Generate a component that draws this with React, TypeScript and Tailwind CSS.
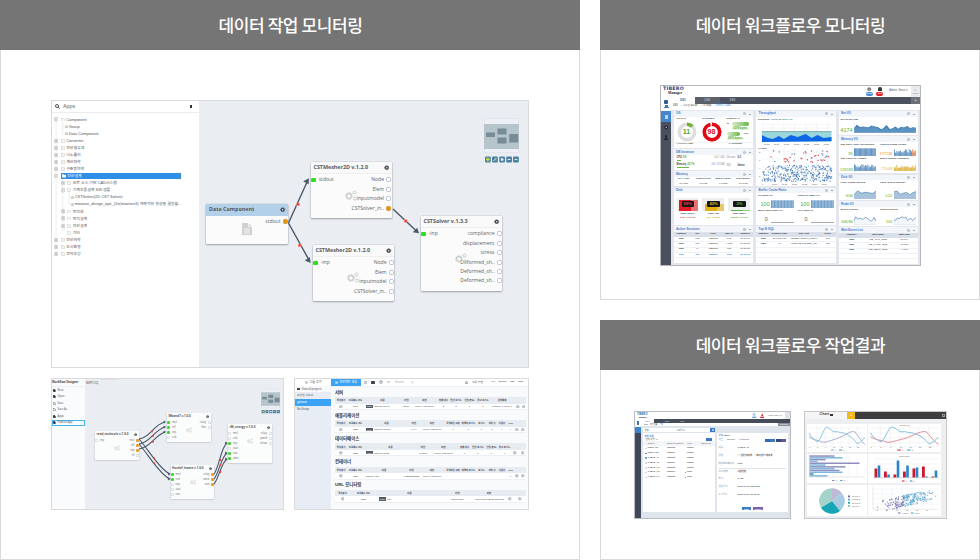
import React, { ReactNode } from "react";

const KR = "font-['Liberation_Sans','Noto_Sans_CJK_KR',sans-serif]";

function Panel({ title, className, children }: { title: string; className: string; children: ReactNode }) {
  return (
    <section className={`flex flex-col ${className}`}>
      <h2 className="flex h-[50px] shrink-0 items-center justify-center bg-[#757575] pl-[1px] font-['Noto_Sans_CJK_KR',sans-serif] text-[17px] font-medium tracking-[-0.4px] text-white">
        {title}
      </h2>
      <div className="min-h-0 flex-1 border border-t-0 border-[#dadada] bg-white">{children}</div>
    </section>
  );
}

/* ---------- small glyphs ---------- */

function Cog({ className = "", color = "#4a4e52" }: { className?: string; color?: string }) {
  return (
    <svg viewBox="0 0 10 10" className={className}>
      <circle cx="5" cy="5" r="3.8" fill={color} stroke={color} strokeWidth="1.4" strokeDasharray="1.6 1" />
      <circle cx="5" cy="5" r="1.4" fill="#e8e8e8" />
    </svg>
  );
}

function Gears({ className = "" }: { className?: string }) {
  return (
    <svg viewBox="0 0 24 22" className={className} fill="none" stroke="#c9cbcd">
      <circle cx="8" cy="12" r="5" strokeWidth="2.6" />
      <circle cx="8" cy="12" r="7" strokeWidth="1.6" strokeDasharray="2.6 2.9" />
      <circle cx="19" cy="5" r="3" strokeWidth="2" />
      <circle cx="20" cy="17" r="3" strokeWidth="2" />
    </svg>
  );
}

function Ring({ className = "" }: { className?: string }) {
  return (
    <svg viewBox="0 0 10 10" className={className} fill="none" stroke="#7f8d99">
      <circle cx="5" cy="5" r="3.8" strokeWidth="1.6" />
      <circle cx="5" cy="5" r="1" strokeWidth="1.4" />
    </svg>
  );
}

function MiniMap({ small = false }: { small?: boolean }) {
  return (
    <svg viewBox="0 0 35 46" className={small ? "h-[25px] w-[19px]" : "h-[46px] w-[35px]"}>
      <rect x=".3" y=".3" width="34.4" height="34.4" fill="#edf0f4" stroke="#dbe1e7" strokeWidth=".6" />
      <rect y="6" width="35" height="25" fill="#b6c4cc" />
      <g fill="#768d98">
        <rect x="2" y="14.5" width="9" height="4.5" />
        <rect x="13.5" y="10.5" width="9" height="6" />
        <rect x="13.5" y="19.5" width="9" height="6" />
        <rect x="25.2" y="16" width="9" height="8.5" />
      </g>
      {[1, 8, 15.2, 22.2, 29].map((x, i) => (
        <g key={x}>
          <rect x={x} y="38.5" width="5.8" height="6" rx="1" fill="#4e819f" />
          {i === 0 ? (
            <path d={`M${x + 1} 41.5h3.8M${x + 2.9} 39.6v3.8`} stroke="#c9dc36" strokeWidth="1.3" />
          ) : (
            <path d={i === 1 ? `M${x + 1.5} 43l2.8-3` : `M${x + 1.6} 41.5h2.6`} stroke="#e5f0f5" strokeWidth={i === 2 ? 2.4 : 1} />
          )}
        </g>
      ))}
    </svg>
  );
}

/* ---------- job monitoring: application tree ---------- */

type TreeItem = { t: string; d: number; leaf?: boolean; open?: boolean; sel?: boolean; bare?: boolean };
const tree: TreeItem[] = [
  { t: "Component", d: 0, open: true },
  { t: "Group", d: 1, leaf: true },
  { t: "Data Component", d: 1, leaf: true },
  { t: "Converter", d: 0 },
  { t: "전산열유체", d: 0 },
  { t: "나노물리", d: 0 },
  { t: "계산화학", d: 0 },
  { t: "구조동역학", d: 0 },
  { t: "전산설계", d: 0, open: true, sel: true },
  { t: "오픈 소스 기반 CAD시스템", d: 1 },
  { t: "기계부품설계 SW 샘플", d: 1, open: true },
  { t: "CSTSolver(2D CST Solver)", d: 2, leaf: true },
  { t: "moatore_design_opti_(2e(moatore3) 개략적인 형상을 결정함..", d: 2, leaf: true },
  { t: "최적화", d: 1 },
  { t: "최적설계", d: 1 },
  { t: "전산설계", d: 1 },
  { t: "기타", d: 1, bare: true },
  { t: "전산의학", d: 0 },
  { t: "도시환경", d: 0 },
  { t: "전자부성", d: 0 },
];
const indent = ["pl-[2px]", "pl-[8.5px]", "pl-[13px]"];

function Expander({ open }: { open?: boolean }) {
  return (
    <svg viewBox="0 0 8 8" className="mr-[2.2px] h-[4.4px] w-[4.4px] shrink-0" fill="none" stroke="#989898" strokeWidth="1">
      <circle cx="4" cy="4" r="3.4" fill="#fff" />
      <path d={open ? "M2 4h4" : "M2 4h4M4 2v4"} />
    </svg>
  );
}

function Tree() {
  return (
    <div className={`w-[147px] shrink-0 overflow-hidden bg-white leading-none text-[#555] ${KR}`}>
      <div className="flex h-[12px] items-center border-b border-[#ececec] pl-[3px] pr-[7px]">
        <svg viewBox="0 0 10 10" className="h-[5px] w-[5px]" fill="none" stroke="#444" strokeWidth="1.8">
          <circle cx="4" cy="4" r="3" />
          <path d="M6 6l3.4 3.4" />
        </svg>
        <span className="ml-[3px] text-[5.3px] text-[#666]">Apps</span>
        <span className="ml-auto h-[2.5px] w-[2.5px] bg-[#333]" />
      </div>
      <div className="relative mt-[3px]">
        <svg className="absolute left-0 top-0 h-[145px] w-[24px]" stroke="#c4c4c4" strokeWidth=".5" strokeDasharray=".7 .5" fill="none">
          <path d="M4 3v135M10.7 6v12M10.7 11h4M10.7 18h4M10.7 62v52h4M17 76v12h4M17 81h4" />
        </svg>
        {tree.map((n, i) => (
          <div key={i} className={`relative flex h-[7.08px] items-center ${n.leaf ? (n.d === 1 ? "pl-[13px]" : "pl-[19px]") : indent[n.d]}`}>
            {!n.leaf && (n.bare ? <span className="w-[6.6px]" /> : <Expander open={n.open} />)}
            <div className={`flex h-[6px] items-center whitespace-nowrap text-[3.95px] ${n.sel ? "w-[120.5px] bg-[#2f8fe6] text-white" : ""}`}>
              {n.leaf ? (
                <svg viewBox="0 0 8 8" className="mr-[.3px] h-[3.6px] w-[3.4px] shrink-0" fill="none" stroke="#8b8b8b">
                  <circle cx="4" cy="4" r="3" />
                  <path d="M4 2v4" />
                </svg>
              ) : (
                <svg viewBox="0 0 10 8" className={`mr-[1.3px] h-[3.7px] w-[4.3px] shrink-0 ${n.sel ? "ml-[1px]" : ""}`} fill={n.sel ? "#fff" : "none"} stroke={n.sel ? "#fff" : "#a6a6a6"}>
                  <path d="M.5 7.3V.8h3l1 1.2h5v5.3z" />
                </svg>
              )}
              <span>{n.t}</span>
            </div>
          </div>
        ))}
      </div>
    </div>
  );
}

/* ---------- workflow nodes on the canvas ---------- */

type Port = { t: string; on?: boolean };
function BigNode({ place, title, left, right, blue }: { place: string; title: string; left?: string; right: Port[]; blue?: boolean }) {
  return (
    <div className={`absolute rounded-[1px] bg-[#fbfbfb] font-['Open_Sans',sans-serif] leading-none shadow-[0_1px_2px_rgba(60,70,80,.4),0_0_0_.5px_rgba(60,70,80,.15)] ${place}`}>
      <div className={`flex h-[11.5px] items-center justify-between pl-[3px] pr-[2.5px] text-[5.35px] font-bold text-[#555a5f] ${blue ? "bg-[#b3d0eb]" : "border-b border-[#efefef] bg-[#f9f9f9]"}`}>
        <span className="whitespace-nowrap">{title}</span>
        <Cog className="h-[5.4px] w-[5.4px]" />
      </div>
      <div className="flex justify-between pr-[.5px] pt-[1.5px] text-[5.05px] text-[#5f6468]">
        <div className="flex h-[9.5px] items-center gap-[3px] pl-[.7px]">
          {left && (
            <>
              <span className="h-[4.5px] w-[4.5px] rounded-[1px] bg-[#2be01c]" />
              <span>{left}</span>
            </>
          )}
        </div>
        <div className="flex flex-col items-end">
          {right.map((p, i) => (
            <div key={i} className="flex h-[9.45px] items-center gap-[2px] whitespace-nowrap">
              <span>{p.t}</span>
              <span className={`h-[5px] w-[5px] rounded-[1.5px] border ${p.on ? "border-[#d99a3c] bg-[#ea940d]" : "border-[#bbbfd0] bg-white"}`} />
            </div>
          ))}
        </div>
      </div>
    </div>
  );
}

function JobMonitor() {
  return (
    <div className="flex h-[268px] w-[478px] overflow-hidden border border-[#d8dadc] bg-[#eaeef3]">
      <Tree />
      <div className="relative flex-1">
        <BigNode blue place="left-[7px] top-[103px] h-[40px] w-[82px]" title="Data Component" right={[{ t: "stdout", on: true }]} />
        <BigNode place="left-[111.5px] top-[61px] h-[56px] w-[81px]" title="CSTMesher2D v.1.2.0" left="stdout" right={[{ t: "Node" }, { t: "Elem" }, { t: "inputmodel" }, { t: "CSTSolver_in..", on: true }]} />
        <BigNode place="left-[113.5px] top-[144px] h-[56px] w-[81.5px]" title="CSTMesher2D v.1.2.0" left="-inp" right={[{ t: "Node" }, { t: "Elem" }, { t: "inputmodel" }, { t: "CSTSolver_in.." }]} />
        <BigNode
          place="left-[221.5px] top-[115px] h-[74.5px] w-[81.5px]"
          title="CSTSolver v.1.3.3"
          left="-inp"
          right={[{ t: "compliance" }, { t: "displacement" }, { t: "stress" }, { t: "Deformed_sh.." }, { t: "Deformed_sh.." }, { t: "Deformed_sh.." }]}
        />
        <svg viewBox="0 0 10 12" className="absolute left-[43px] top-[122px] h-[12px] w-[10px]">
          <path d="M0 0h6.5L10 3.5V12H0z" fill="#cfd1d3" />
          <path d="M6.5 0v3.5H10M2 6h6M2 8h6M2 10h6" stroke="#f5f5f5" fill="none" />
        </svg>
        <Gears className="absolute left-[146px] top-[89px] h-[11px] w-[12px]" />
        <Gears className="absolute left-[148px] top-[171px] h-[11px] w-[12px]" />
        <Gears className="absolute left-[256px] top-[152px] h-[11px] w-[12px]" />
        <svg className="absolute inset-0 h-full w-full" viewBox="199 101 329 266">
          <g stroke="#495968" strokeWidth="1.4" fill="none">
            <path d="M288.5 223L307.5 181M288.5 223L309 260M393 209L417 231.5" />
          </g>
          <g fill="#495968">
            <path d="M309 178.3l-5.8 3 5.4 3z" />
            <path d="M310.7 263l-5.9-2.4 5-3.6z" />
            <path d="M419 233.3l-6.2-1 4.4-4.6z" />
          </g>
          <g fill="#f23b30" stroke="#ffb0aa" strokeWidth=".4">
            <rect x="296.7" y="203" width="2.8" height="2.8" />
            <rect x="298.2" y="244" width="2.8" height="2.8" />
            <rect x="404.2" y="219.6" width="2.8" height="2.8" />
          </g>
        </svg>
        <div className="absolute left-[285px] top-[17px] flex">
          <MiniMap />
        </div>
      </div>
    </div>
  );
}

/* ---------- workflow designer ---------- */

function SmallPort({ on, color }: { on?: boolean; color: string }) {
  return (
    <svg viewBox="0 0 6 6" className="h-[3px] w-[3px] shrink-0">
      <rect x=".6" y=".6" width="4.8" height="4.8" rx="1" fill={on ? color : "#fff"} stroke={on ? color : "#b7bcca"} strokeWidth="1" />
    </svg>
  );
}

function SmallNode({ place, title, left, right }: { place: string; title: string; left: Port[]; right: Port[] }) {
  return (
    <div className={`absolute bg-[#fbfcfc] leading-none shadow-[0_.5px_1.5px_rgba(60,70,80,.4)] ${place}`}>
      <div className="flex h-[7px] items-center justify-between pl-[1.5px] pr-[1.5px] text-[3px] font-bold text-[#555]">
        <span className="whitespace-nowrap">{title}</span>
        <Cog className="h-[3.2px] w-[3.2px]" />
      </div>
      <div className="flex justify-between text-[2.8px] text-[#666]">
        <div>
          {left.map((p, i) => (
            <div key={i} className="flex h-[5px] items-center gap-[2px]">
              <SmallPort on={p.on} color="#2fd31c" />
              <span>{p.t}</span>
            </div>
          ))}
        </div>
        <div className="flex flex-col items-end">
          {right.map((p, i) => (
            <div key={i} className="flex h-[5px] items-center gap-[1.5px]">
              <span>{p.t}</span>
              <SmallPort on={p.on} color="#e8920f" />
            </div>
          ))}
        </div>
      </div>
      <Gears className="absolute left-[19px] top-[14px] h-[6px] w-[6px]" />
    </div>
  );
}

const wires = [
  "M139 439C150 438 154 424 165 422",
  "M139 444C150 443 154 430 165 427",
  "M139 449C150 448 154 436 165 432",
  "M139 439C148 449 160 470 170 474",
  "M139 444C148 454 160 475 170 479",
  "M214 474C219 468 221 447 227 443",
  "M214 479C219 473 221 457 227 453",
  "M214 484C219 478 221 463 227 459",
];

function Designer() {
  return (
    <div className="flex h-[132px] w-[233px] overflow-hidden border border-[#d8dadc] bg-[#eaeef3] font-['Open_Sans',sans-serif] leading-none">
      <div className="w-[33px] shrink-0 bg-[#fafbfd]">
        <div className="flex h-[8px] items-center whitespace-nowrap border-b border-[#eceef2] text-[2.8px] font-bold text-[#444]">Workflow Designer</div>
        {["New", "Open", "Save", "Save As", "Apps", "Publish App"].map((t, i) => (
          <div key={t} className={`flex h-[6.5px] items-center gap-[2px] text-[2.7px] text-[#444] ${i === 5 ? "border border-[#48b3ec]" : "pl-[1px]"}`}>
            <svg viewBox="0 0 6 7" className="h-[3px] w-[2.6px]" fill={i === 2 || i === 3 ? "none" : "#222"} stroke="#333">
              <path d="M.5.5h3l2 2v4h-5z" />
            </svg>
            <span className="whitespace-nowrap">{t}</span>
          </div>
        ))}
      </div>
      <div className="relative flex-1">
        <span className="ml-[1px] mt-[2px] block text-[4.2px] text-[#555]">MPCQ</span>
        <SmallNode place="left-[10px] top-[52px] h-[28.5px] w-[44px]" title="read_molecule v.1.0.0" left={[{ t: "inp" }]} right={[{ t: "mol", on: true }, { t: "inf", on: true }, { t: "inp", on: true }, { t: "nf" }]} />
        <SmallNode place="left-[82px] top-[34px] h-[28.5px] w-[43.5px]" title="Mband7 v.1.0.0" left={[{ t: "mol", on: true }, { t: "inf", on: true }, { t: "inp", on: true }, { t: "crd" }]} right={[{ t: "relay" }, { t: "fwc" }]} />
        <SmallNode place="left-[85.5px] top-[86px] h-[34px] w-[43.5px]" title="Hucdef_lname v.1.0.0" left={[{ t: "mol", on: true }, { t: "crd", on: true }, { t: "inp" }, { t: "stat" }, { t: "nat" }]} right={[{ t: "relay", on: true }, { t: "smat", on: true }, { t: "stat", on: true }]} />
        <SmallNode place="left-[143px] top-[45px] h-[39px] w-[43.5px]" title="rM_energy v.1.0.0" left={[{ t: "mol" }, { t: "crd" }, { t: "inp", on: true }, { t: "stat" }, { t: "nat", on: true }, { t: "abst", on: true }]} right={[{ t: "relay" }, { t: "pwrd" }, { t: "show" }]} />
        <svg className="absolute inset-0 h-full w-full" viewBox="85 379 198 130">
          <path d="M101 379.2h17" stroke="#f0c3c3" strokeWidth=".6" />
          {wires.map((d) => (
            <path key={d} d={d} fill="none" stroke="#485667" strokeWidth="1.1" />
          ))}
          <g fill="#485667">
            {[[165, 422], [165, 427], [165, 432], [169.5, 474], [169.5, 479], [226.5, 443], [226.5, 453], [226.5, 459]].map(([x, y]) => (
              <path key={`${x}-${y}`} d={`M${x + 1} ${y}l-2.4-1.6v3.2z`} />
            ))}
          </g>
          <g fill="#f23b30">
            {[[152, 431.5], [153, 436], [153, 442], [154, 458], [154, 463], [220.5, 460], [220.5, 465], [220.5, 472]].map(([x, y]) => (
              <circle key={`${x}-${y}`} cx={x} cy={y} r=".9" />
            ))}
          </g>
        </svg>
        <div className="absolute left-[176px] top-[10px] flex">
          <MiniMap small />
        </div>
      </div>
    </div>
  );
}

/* ---------- project list ---------- */

type Section = { name: string; grid: string; head: string[]; row: string[] };
const sections: Section[] = [
  { name: "서버", grid: "grid-cols-[12px_17px_37px_11px_25px_13px_12px_15px_12px_26px_6px_5px]", head: ["즐겨찾기", "프로젝트 코드", "이름", "타입", "리전", "전체 대수", "정상 호스트", "알림(중요)", "경고 호스트", "운영체제", "", ""], row: ["o", "8246", "gateone-server", "INFRA", "Korea AWS Seoul", "3", "3", "0", "1", "Window: 1, Linux: 1", "o", "o"] },
  { name: "애플리케이션", grid: "grid-cols-[12px_17px_45px_10px_26px_16px_15px_11px_10px_10px_7px_6px_6px]", head: ["즐겨찾기", "프로젝트 코드", "이름", "타입", "리전", "활성화된 서버", "어플리 호스트", "호스트", "코어 수", "사용자", "TPS", "", ""], row: ["o", "8235", "gateone-tomcat", "JAVA", "Korea AWS Seoul", "1", "0", "1", "1", "0", "0", "o", "o"] },
  { name: "데이터베이스", grid: "grid-cols-[12px_17px_53px_12px_29px_13px_14px_13px_13px_8px_7px]", head: ["즐겨찾기", "프로젝트 코드", "이름", "타입", "리전", "전체 대수", "정상 호스트", "알림(중요)", "경고 호스트", "", ""], row: ["o", "8255", "gateone-mysql", "MYSQL", "Korea AWS Seoul", "1", "1", "0", "0", "o", "o"] },
  { name: "컨테이너", grid: "grid-cols-[12px_17px_40px_15px_26px_16px_15px_11px_10px_10px_7px_6px_6px]", head: ["즐겨찾기", "프로젝트 코드", "이름", "타입", "리전", "활성화된 서버", "어플리 호스트", "호스트", "코어 수", "사용자", "TPS", "", ""], row: ["o", "8234", "gateone-k8s", "KUBERNETES", "Korea AWS Seoul", "-", "-", "-", "-", "-", "0", "o", "o"] },
  { name: "URL 모니터링", grid: "grid-cols-[15px_27px_65px_31px_32px_10px_10px]", head: ["즐겨찾기", "프로젝트 코드", "이름", "타입", "리전", "", ""], row: ["o", "8235", "test", "URLCHECK", "AWS Korea METIS Materials", "o", "o"] },
];

function Projects() {
  return (
    <div className={`flex h-[132px] w-[235px] overflow-hidden border border-[#d8dadc] bg-[#f9fafc] leading-none text-[#555] ${KR}`}>
      <div className="w-[36px] shrink-0 bg-[#e8edf5] text-[2.8px]">
        <div className="flex h-[7px] items-center justify-center gap-[2px] bg-white text-[3px]">
          <Ring className="h-[3px] w-[3px]" />그룹 추가
        </div>
        <div className="flex h-[6px] items-center gap-[2px] bg-[#f8f9fb] pl-[2px]"><span className="h-[2px] w-[2.5px] bg-[#444]" />View all projects</div>
        <div className="flex h-[7px] items-center pl-[2px]">소유한 서비스</div>
        <div className="flex h-[6.5px] items-center bg-[#3ba3f6] pl-[2px] text-white">gateone</div>
        <div className="flex h-[7px] items-center pl-[2px]">No Group</div>
      </div>
      <div className="w-[197px]">
        <div className="flex h-[7.5px] items-center border-b border-[#edf0f3] bg-white text-[2.8px]">
          <div className="flex h-full w-[30px] items-center justify-center gap-[2px] bg-[#3ba3f6] text-[3px] text-white">
            <span className="h-[2.5px] w-[2.5px] rounded-full bg-[#a8d6fb]" />프로젝트 생성
          </div>
          <div className="flex w-[31px] items-center justify-around pl-[1px]">
            <span className="h-[3px] w-[3px] bg-[#c5c9ce]" />
            <span className="h-[3.4px] w-[3.4px] bg-[#444a50]" />
            <Ring className="h-[4px] w-[4px]" />
            <span className="h-[2px] w-[3px] rounded-b-full bg-[#d0d4d8]" />
          </div>
          <span className="w-[19px] pl-[3px] text-[#aaa]">Search</span>
          <svg viewBox="0 0 10 10" className="h-[3px] w-[3px]" fill="none" stroke="#aaa"><circle cx="4" cy="4" r="3" /><path d="M6 6l3 3" /></svg>
          <span className="ml-auto h-[2.6px] w-[2.6px] rounded-t-full bg-[#b2b8be]" />
          <span className="ml-[4px] w-[19px] whitespace-nowrap">그룹 권한</span>
          <span className="flex w-[37px] justify-between whitespace-nowrap pr-[3px] text-[2.5px] font-bold"><span>AP -</span><span>Server -</span><span>DB -</span><span>URL -</span></span>
        </div>
        <div className="flex flex-col pl-[4px] pr-[2px] pt-[3.3px]">
          {sections.map((s, k) => (
            <div key={s.name} className="h-[23.1px]">
              <div className="flex h-[7px] items-center text-[4.4px] font-bold text-[#333]">{s.name}</div>
              <div className={`mt-[.5px] grid h-[6.5px] items-center justify-items-center bg-[#e7ebf2] text-[2.35px] font-bold text-[#3f4448] ${s.grid}`}>
                {s.head.map((h, i) => <span key={i} className="whitespace-nowrap">{h}</span>)}
              </div>
              <div className={`grid h-[6.5px] items-center justify-items-center border-b border-[#edeff2] bg-white text-[2.35px] text-[#444] ${s.grid}`}>
                {s.row.map((h, i) =>
                  h === "o" ? (
                    <Ring key={i} className="h-[3.6px] w-[3.6px]" />
                  ) : (
                    <span key={i} className={`whitespace-nowrap ${i === 2 ? "flex items-center gap-[1.5px] justify-self-start pl-[2px]" : ""}`}>
                      {i === 2 && k !== 3 && <b className="bg-[#555c65] px-[1px] py-[.6px] text-[2.2px] text-white">Free</b>}
                      {h}
                    </span>
                  )
                )}
              </div>
            </div>
          ))}
        </div>
      </div>
    </div>
  );
}

/* ---------- Tibero dashboard ---------- */

function Card({ title, h, children }: { title: string; h: string; children?: ReactNode }) {
  return (
    <div className={`flex flex-col overflow-hidden bg-white ${h}`}>
      <div className="flex h-[5.8px] shrink-0 items-center justify-between bg-[#f2f6fb] px-[2.5px]">
        <b className="text-[3.1px] text-[#3f78cc]">{title}</b>
        <span className="flex items-center gap-[3px]">
          <Ring className="h-[3px] w-[3px]" />
          <span className="h-[.6px] w-[2px] bg-[#a4a9b0]" />
        </span>
      </div>
      <div className="min-h-0 flex-1">{children}</div>
    </div>
  );
}

const rnd = (i: number) => {
  const v = Math.sin(i * 12.9898) * 43758.5453;
  return v - Math.floor(v);
};

function Area({ color, fill, n = 14, seed = 1, className }: { color: string; fill: string; n?: number; seed?: number; className: string }) {
  const pts = Array.from({ length: n }, (_, i) => `${(i * 100) / (n - 1)},${8 + rnd(i + seed) * 16}`);
  return (
    <svg viewBox="0 0 100 36" preserveAspectRatio="none" className={`shrink-0 ${className}`}>
      <polygon points={`0,36 ${pts.join(" ")} 100,36`} fill={fill} />
      <polyline points={pts.join(" ")} fill="none" stroke={color} strokeWidth="2.5" />
      <path d="M0 0v36h100" fill="none" stroke="#b9c0c8" strokeWidth="1.5" />
    </svg>
  );
}

function Bars({ color, flat, n = 18, seed = 1, tail, className }: { color: string; flat?: boolean; n?: number; seed?: number; tail?: boolean; className: string }) {
  return (
    <svg viewBox={`0 0 ${n * 2} 20`} preserveAspectRatio="none" className={`shrink-0 ${className}`}>
      <rect width={n * 2} y={flat ? 1 : 12} height="19" fill={color} opacity=".45" />
      {Array.from({ length: n }, (_, i) => {
        const h = flat ? 19 : 8 + rnd(i + seed) * 9;
        return <rect key={i} x={i * 2} y={20 - h} width="1.5" height={h} fill={tail && i > n - 4 ? "#ee7a3a" : color} />;
      })}
    </svg>
  );
}

function Donut({ v, pct, color }: { v: string; pct: number; color: string }) {
  return (
    <div className="relative h-[20px] w-[20px]">
      <svg viewBox="0 0 20 20" className="h-full w-full -rotate-90">
        <circle cx="10" cy="10" r="7.7" fill="none" stroke="#dedede" strokeWidth="3.6" />
        <circle cx="10" cy="10" r="7.7" fill="none" stroke={color} strokeWidth="3.6" strokeDasharray={`${pct * 0.484} 60`} />
      </svg>
      <b className={`absolute inset-0 flex items-center justify-center text-[7px] ${pct > 50 ? "text-[#e00d18]" : "text-[#57a82c]"}`}>{v}</b>
    </div>
  );
}

function Metric({ name, v, warn = "text-[4.3px] text-[#59ad35]", children }: { name: string; v: string; warn?: string; children: ReactNode }) {
  return (
    <div className="flex min-w-0 flex-1 flex-col px-[2px] pt-[2px]">
      <b className="h-[3.6px] whitespace-nowrap text-[2.5px] text-[#444]">{name}</b>
      <div className="flex flex-1 items-end justify-end gap-[1px]">
        <span className={warn}>{v}</span>
        {children}
      </div>
    </div>
  );
}

function MiniTable({ cols, rows, grid, blue }: { cols: string[]; rows: string[][]; grid: string; blue?: boolean }) {
  return (
    <div className="text-[2.5px] text-[#333]">
      <div className={`grid h-[5px] items-center bg-[#d9e0ea] text-center text-[2.4px] font-bold ${grid}`}>{cols.map((c) => <span key={c} className="whitespace-nowrap">{c}</span>)}</div>
      {rows.map((r, i) => (
        <div key={i} className={`grid h-[5.3px] items-center border-b border-[#f0f2f5] text-center ${grid} ${blue && i === 3 ? "font-bold text-[#1889e6]" : ""}`}>
          {r.map((c, j) => <span key={j} className={`whitespace-nowrap ${j === 0 ? "font-bold" : ""}`}>{c}</span>)}
        </div>
      ))}
    </div>
  );
}

const green = "text-[5.6px] text-[#59ad35]";

function Tibero() {
  return (
    <div className={`flex h-[181px] w-[261px] flex-col overflow-hidden border border-[#b4b6b9] bg-white leading-none text-[#444] ${KR}`}>
      <div className="flex h-[11px] shrink-0 items-center pl-[2px]">
        <div>
          <b className="block h-[4.6px] font-['DejaVu_Sans',sans-serif] text-[4.8px] tracking-[.2px] text-[#1d4a82]">TIBERO</b>
          <b className="ml-[5px] block font-['Liberation_Serif',serif] text-[3.6px] text-[#222]">Manager</b>
        </div>
        <div className="ml-auto flex items-center gap-[3px] text-center text-[2.4px] text-white">
          <div><Cog className="mx-auto mb-[.5px] block h-[4.4px] w-[4.4px]" color="#666" /><b className="block rounded-full bg-[#4a89dc] px-[1.2px] py-[.4px]">9999</b></div>
          <div><span className="mx-auto mb-[1px] block h-[4px] w-[3.5px] rounded-t-full bg-[#333]" /><b className="block rounded-full bg-[#f01b24] px-[1.4px] py-[.4px]">123</b></div>
          <span className="mx-[3px] text-[2.7px] text-[#555]">Admin, Steve ▾</span>
        </div>
        <div className="flex h-full w-[9px] flex-col items-center justify-center bg-[#e8eaed] text-[3px] text-[#889]"><span>+</span><span className="text-[2px]">MENU</span></div>
      </div>
      <div className="flex min-h-0 flex-1">
        <div className="flex w-[10px] shrink-0 flex-col items-center bg-[#4a505d]">
          <div className="flex h-[14px] w-full flex-col items-center justify-center bg-white"><span className="h-[4px] w-[4px] rounded-[1px] bg-[#2f5c98]" /><span className="mt-[1px] h-[2px] w-[3px] bg-[#4778ad]" /><span className="h-[1px] w-[5px] bg-[#4778ad]" /></div>
          <div className="flex h-[11px] w-full items-center justify-center bg-[#4686cc] text-white"><span className="h-[4px] w-[3px] bg-[#b9d8f4]" /></div>
          <Cog className="mt-[3px] h-[4.5px] w-[4.5px]" color="#222831" />
          <span className="mt-[5px] h-[3px] w-[2px] rounded-full bg-[#20262e]" /><span className="h-[2px] w-[4px] rounded-t bg-[#20262e]" />
        </div>
        <div className="flex min-w-0 flex-1 flex-col bg-[#e3e7ed]">
          <div className="flex h-[6.5px] shrink-0 items-stretch bg-[#4a505d] text-[2.9px] font-bold text-[#a7abb3]">
            <span className="flex w-[24px] items-center justify-center bg-white text-[#4377b5]">DB1</span>
            <span className="flex w-[25px] items-center justify-center bg-[#5a606c]">DB2</span>
            <span className="flex w-[25px] items-center justify-center">DB3</span>
            <span className="ml-auto flex w-[9px] items-center justify-center bg-[#6b707b] text-white">+</span>
          </div>
          <div className="flex h-[6px] shrink-0 items-center gap-[3px] bg-white pl-[2px] text-[2.6px]"><span>DB1</span><span>- 실시간 모니터</span><span>- TX Map</span><span className="text-[#2d7fd8]">- LRPDT Data</span></div>
          <div className="flex gap-[3px] pl-[2.5px] pt-[1.5px]">
            <div className="flex w-[79.5px] flex-col gap-[1.5px]">
              <Card title="OS" h="h-[36.7px]">
                <div className="flex gap-[5px] pl-[3px] pr-[4px] pt-[1px] text-[2.4px] font-bold">
                  <div><div className="h-[4px]">OS CPU</div><Donut v="11" pct={12} color="#6db13b" /></div>
                  <div><div className="h-[4px]">OS Memory</div><Donut v="98" pct={96} color="#e30613" /></div>
                  <div className="w-[22px]">
                    <div className="h-[4.5px]">Network I/O</div>
                    <div className="flex items-center gap-[3px]"><b>IN</b><span className="h-[3.5px] flex-1 rounded bg-gradient-to-r from-[#d7edcd] to-[#66b544]" /></div>
                    <div className="my-[1px] ml-auto w-[17px] rounded bg-[#e2f4da] py-[.4px] text-center text-[2.8px] text-[#57a82c]">1579 bytes</div>
                    <div className="mt-[2px] flex items-center gap-[3px]"><span className="h-[3.5px] flex-1 rounded bg-gradient-to-r from-[#d7edcd] to-[#66b544]" /><b>OUT</b></div>
                    <div className="my-[1px] w-[17px] rounded bg-[#e2f4da] py-[.4px] text-center text-[2.8px] text-[#57a82c]">3970 bytes</div>
                  </div>
                </div>
                <div className="flex justify-between border-t border-[#eff1f4] px-[3px] pt-[.5px] text-[2.4px]"><span>HostName <b>DB1</b></span><span className="mr-[8px]">IP <b>localhost</b></span></div>
              </Card>
              <Card title="DB Instance" h="h-[20.5px]">
                <div className="grid h-full grid-cols-[50px_11px_1fr] items-center px-[3px] text-[2.6px]">
                  <span><b>CPU</b> <b className="text-[#57a82c]">0%</b><i className="float-right mr-[2px] not-italic text-[#888]">0.0 / 100</i><i className="mt-[.7px] block h-[.8px] w-[4px] bg-[#6ab948]" /></span><span className="text-[#888]">Version</span><b>6.0</b>
                  <span><b>Memory</b> <b className="text-[#57a82c]">25.7%</b><i className="float-right mr-[2px] not-italic text-[#888]">0.8 / 3.2GB</i><i className="mt-[.7px] block h-[.8px] w-[12px] bg-[#6ab948]" /></span><span className="text-[#888]">SID</span><b>tibero</b>
                </div>
              </Card>
              <Card title="Memory" h="h-[15px]">
                <div className="grid grid-cols-4 pt-[1.2px] text-center text-[2.5px]">
                  {["PGA Alloc", "Shared Pool", "Buffer Cache", "Redo Buffer"].map((x) => <b key={x} className="h-[4.5px] whitespace-nowrap">{x}</b>)}
                  {["17.0MB", "179MB", "1.03GB", "10.0MB"].map((x) => <span key={x}>{x}</span>)}
                </div>
              </Card>
              <Card title="Disk" h="h-[37px]">
                <div className="grid h-full grid-cols-3 gap-[4px] px-[3px] pt-[4.5px] text-center text-[2.4px] font-bold">
                  {[["88%", "bg-[#e31b26]", "text-[#f0343c]", "Table Space", "h-[11px]", "5.35 / 6.07GB"], ["42%", "bg-[#e4af13]", "text-[#e2ac12]", "Undo Log", "h-[7px]", "100 / 170MB"], ["2%", "bg-[#58ba42]", "text-[#55bb3c]", "Temp Space", "h-[1px]", "108MB / 11.2GB"]].map((d) => (
                    <div key={d[3]}>
                      <div className="relative flex h-[13.5px] items-end justify-end bg-[#eeeeee]">
                        <span className={`w-[12px] ${d[4]} ${d[1]}`} /><span className={`w-[7px] opacity-60 ${d[4]} ${d[1]}`} />
                        <span className={`absolute left-[5px] top-[3px] flex h-[6.5px] w-[12.5px] items-center justify-center rounded-[1px] bg-[#161616] text-[4.2px] ${d[2]}`}>{d[0]}</span>
                      </div>
                      <div className="mt-[1.2px] h-[4.8px] whitespace-nowrap">{d[3]}</div>
                      <div className={`whitespace-nowrap ${d[2]}`}>{d[5]}</div>
                    </div>
                  ))}
                </div>
              </Card>
              <Card title="Active Sessions" h="h-[36.5px]">
                <MiniTable blue grid="grid-cols-5" cols={["Instance", "SID", "User", "SQL ID", "Elapsed"]} rows={[["DB1", "135", "TIBERO", "545", "00:14:10"], ["DB1", "130", "TIBERO", "4,002", "00:10:05"], ["DB1", "94", "TIBERO", "151", "00:10:05"], ["DB1", "101", "TIBERO", "1106", "00:12:10"]]} />
              </Card>
            </div>
            <div className="flex w-[79.5px] flex-col gap-[1.5px]">
              <Card title="Throughput" h="h-[75.2px]">
                <div className="px-[2px] pt-[2px] text-[2.5px] font-bold">Sessions: <span className="text-[#3875bd]">Active</span> of <span className="text-[#2b9ca2]">Total (73)</span></div>
                <svg viewBox="0 0 80 65" className="h-[65px] w-[79.5px]">
                  <g stroke="#dfe5ea" strokeWidth=".4"><path d="M6 2v20M17 2v20M28 2v20M39 2v20M50 2v20M61 2v20M72 2v20M6 3h70M6 7h70M6 30h70M6 38h70M6 46h70M6 54h70M17 28v33M28 28v33M39 28v33M50 28v33M61 28v33M72 28v33" /></g>
                  <path d="M6 10.5h70V21H6z" fill="#9ad7dc" /><path d="M6 10.5h70" stroke="#4c8f90" strokeWidth=".7" />
                  <path d="M6 21v-7l6 3 5 1 6-3 5 3 7-4 7 2 8-3 6 4 6-3 6 3 8-1v4z" fill="#0d66e5" />
                  <g fontSize="2.3" fill="#555">
                    {["11:55", "11:10", "11:15", "11:20", "11:22", "11:22", "11:23"].map((t, i) => <text key={i} x={8 + i * 10} y="23.7">{t}</text>)}
                    <text x="2" y="27.5" fontWeight="bold" fontSize="2.5">TX Map</text>
                    {["9", "11:10", "11:15", "11:20", "11:22", "11:23", "11:24"].map((t, i) => <text key={i} x={6 + i * 10} y="63.8">{t}</text>)}
                    {["2", "6", "4", "2"].map((t, i) => <text key={i} x="3" y={32 + i * 8}>{t}</text>)}
                  </g>
                  {Array.from({ length: 340 }, (_, i) => <rect key={i} x={6 + rnd(i + 1) * 70} y={60 - rnd(i + 900) ** 1.2 * 16} width="1.05" height="1.05" fill={i % 3 ? "#4176b2" : "#7ba3ce"} />)}
                  {Array.from({ length: 42 }, (_, i) => <rect key={i} x={8 + rnd(i + 300) * 66} y={29 + rnd(i + 700) * 12} width="1.2" height="1.2" fill={i % 3 ? "#e34248" : "#5887be"} />)}
                </svg>
              </Card>
              <Card title="Buffer Cache Ratio" h="h-[37px]">
                <div className="flex h-[14.5px]">
                  <Metric name="Hit Ratio (%)" v="100" warn={green}><Bars flat color="#729fc9" n={16} className="h-[8px] w-[23px]" /></Metric>
                  <Metric name="Latch Hit Ratio (%)" v="100" warn={green}><Bars flat color="#729fc9" n={16} className="h-[8px] w-[23px]" /></Metric>
                </div>
                <div className="flex h-[15px]">
                  <Metric name="Buffer Wait Ratio (%)" v="0" warn="text-[5.5px] mr-[2px] text-[#666]"><span className="h-[1px] w-[23px] shrink-0 bg-[#aaa]" /></Metric>
                  <Metric name="Free Wait (%)" v="0" warn="text-[5.5px] mr-[2px] text-[#666]"><span className="h-[1px] w-[23px] shrink-0 bg-[#aaa]" /></Metric>
                </div>
              </Card>
              <Card title="Top N SQL" h="h-[36.5px]">
                <MiniTable grid="grid-cols-[15px_17px_32px_1fr]" cols={["Instance", "Elapsed Time", "SQL Text", "EXEC"]} rows={[["DB1", "117,111,071", "INSERT INTO w_history", "107"], ["DB1", "99", "UPDATE files SET_usr", "108"], ["", "", "", ""], ["", "", "", ""]]} />
              </Card>
            </div>
            <div className="flex w-[79px] flex-col gap-[1.5px]">
              <Card title="Net I/O" h="h-[23.7px]">
                <div className="flex h-full pb-[1.5px]"><Metric name="Net In/Out (KB)" v="4174" warn="text-[5.4px] text-[#59ad35]"><Area color="#3f7fb6" fill="#5b93c3" n={22} className="h-[10px] w-[62px]" /></Metric></div>
              </Card>
              <Card title="Memory I/O" h="h-[37px]">
                <div className="flex h-[14px]"><Metric name="SQL Exec. Rate (executions)" v="95"><Bars flat color="#5f91c0" className="h-[8px] w-[22px]" /></Metric><Metric name="Latch & Reads (reads)" v="177136" warn="text-[3.9px] text-[#ef8642]"><Bars tail color="#5f91c0" className="h-[8px] w-[22px]" /></Metric></div>
                <div className="flex h-[15.5px]"><Metric name="SQL Parse Rt. (count)" v="126593" warn="text-[3.9px] text-[#59ad35]"><Bars color="#5f91c0" seed={30} className="h-[8px] w-[22px]" /></Metric><Metric name="Block Change (changes)" v="75508" warn="text-[4.1px] text-[#e2ba4a]"><Bars color="#dfb643" seed={60} className="h-[8px] w-[22px]" /></Metric></div>
              </Card>
              <Card title="Disk I/O" h="h-[25px]">
                <div className="flex h-full pb-[1px]"><Metric name="Phys. Reads (blocks)" v="606"><Area color="#4f85b4" fill="#a6c2dc" n={7} className="h-[11px] w-[22px]" /></Metric><Metric name="Phys. Writes (blocks)" v="512"><Area color="#4f85b4" fill="#a6c2dc" n={8} seed={50} className="h-[11px] w-[22px]" /></Metric></div>
              </Card>
              <Card title="Redo I/O" h="h-[24.5px]">
                <div className="flex h-full pb-[1px]"><Metric name="Writes (blocks)" v="34096"><Area color="#4f85b4" fill="#f4f7fa" n={13} className="h-[11px] w-[22px]" /></Metric><Metric name="Writes (blocks)" v="110"><Area color="#4f85b4" fill="#f4f7fa" n={14} seed={44} className="h-[11px] w-[22px]" /></Metric></div>
              </Card>
              <Card title="Wait Event List" h="h-[36.5px]">
                <MiniTable grid="grid-cols-3" cols={["Instance", "Wait Name", "Wait Time"]} rows={[["DB1", "WE_SVC_IDLE", "10,074"], ["DB1", "WE_LARC_IDLE", "10,002"], ["DB1", "WE_SEPT_IDLE", "9,108"], ["", "", ""]]} />
              </Card>
            </div>
          </div>
        </div>
      </div>
    </div>
  );
}

/* ---------- job result screens ---------- */

const btnColor = ["bg-[#3568b9]", "bg-[#3b78bd]", "bg-[#3a4b69]", "bg-[#6651a5]"];

function Detail() {
  const rows = ["Index_DF", "Index_DS", "TABLE_IF", "TABLE_IS", "TABLE_FT", "TABLE_PT", "TABLE_PY"];
  return (
    <div className={`flex h-[108px] w-[157px] flex-col overflow-hidden border border-[#babdc1] bg-white leading-none text-[#555] ${KR}`}>
      <div className="flex h-[7px] shrink-0 items-center pl-[2px]">
        <div><b className="block text-[2.8px] text-[#2a72ab]">TIBERO</b><b className="ml-[2px] block text-[2px] text-[#333]">Manager</b></div>
        <div className="ml-auto flex items-center gap-[3px]">
          <svg viewBox="0 0 5 6" className="h-[5.5px] w-[4.5px]"><circle cx="2.5" cy="1.6" r="1.1" fill="none" stroke="#3a7ed0" strokeWidth=".6" /><path d="M.3 4h4.4v1.8H.3z" fill="#62a2e5" /></svg>
          <svg viewBox="0 0 5 6" className="h-[5.5px] w-[4.5px]"><path d="M1.2 3.4L2.5.2l1.3 3.2z" fill="#d33" /><path d="M.3 4h4.4v1.8H.3z" fill="#e21f2a" /></svg>
          <span className="mr-[3px] text-[2.2px]">Admin, Steve ▾</span>
        </div>
        <span className="h-full w-[5px] bg-[#dfe3e9]" />
      </div>
      <div className="flex min-h-0 flex-1">
        <div className="w-[6px] shrink-0 bg-[#3e4858]"><div className="flex h-[8px] items-center justify-center bg-white"><span className="h-[4px] w-[2px] bg-[#3b72ae]" /></div><div className="h-[6px] bg-[#3d82cd]" /></div>
        <div className="flex min-w-0 flex-1 flex-col bg-[#dfe5ed]">
          <div className="flex h-[3.5px] shrink-0 items-center gap-[11px] bg-[#444b59] text-[2.2px] text-[#ccc]"><span className="h-full w-[13px] bg-white pt-[.5px] text-center text-[#777]">DB1</span><span>DB2</span><span>DB3</span></div>
          <div className="flex h-[3.7px] shrink-0 items-center bg-white pl-[3px] text-[2.1px]">DB1 - 작업현황 -&nbsp;<span className="text-[#2f83d9]">결과</span><span className="ml-auto bg-[#8b9099] px-[1.5px] py-[.4px] text-white">Schedule</span></div>
          <div className="flex gap-[1.5px] p-[1.5px] pt-[1.5px]">
            <div className="w-[72.5px]">
              <div className="flex h-[4.5px] items-center bg-white pl-[2px] text-[2.3px]"><span className="w-[32px]">유형 :</span><span>시작일시</span><span className="ml-auto flex h-[4.5px] w-[5px] items-center justify-center bg-[#3c79c8]"><span className="h-[2px] w-[2px] rounded-full bg-[#bcd8f7]" /></span></div>
              <div className="mt-[1px] h-[79px] bg-white pt-[1.5px]">
                <b className="ml-[2px] block text-[2.3px] text-[#3979c9]">작업 목록</b>
                <div className="flex h-[4.5px] items-center px-[3px] text-[2.3px]">전체 작업 (7)<span className="ml-auto mr-[.5px] h-[2.8px] w-[3px] bg-[#3c79c8]" /><span className="h-[2.8px] w-[3px] bg-[#3c79c8]" /></div>
                {[["Owner", "Name/Program", "User", "Object ID"], ...rows.map((r, i) => [r, i % 2 ? "USER1" : "USER2", i > 4 ? "USR" : "USER", ""])].map((r, i) => (
                  <div key={i} className={`grid h-[4.8px] grid-cols-[22px_20px_14px_1fr] items-center pl-[2.5px] text-[2.4px] ${i === 0 ? "bg-[#f3f5f8]" : ""}`}>
                    {r.map((c, j) => (
                      <span key={j} className={`flex items-center whitespace-nowrap ${i && j < 3 ? "font-bold text-[#555]" : ""}`}>
                        {j === 0 && <i className={`mr-[1px] h-[1.6px] w-[1.6px] rounded-full ${i === 2 || i === 3 ? "bg-[#3c86dd]" : i ? "bg-[#cdd3da]" : ""}`} />}
                        {j === 2 && i > 5 && <i className="-ml-[2px] mr-[.6px] h-[1.4px] w-[1.4px] rounded-full bg-[#e5484d]" />}
                        {c}
                      </span>
                    ))}
                  </div>
                ))}
              </div>
            </div>
            <div className="mt-[5.5px] h-[79px] w-[71.5px] bg-white px-[2px] pt-[1.5px] text-[2.4px]">
              <div className="h-[4px]"><span className="text-[#3979c9]">상세</span> <b>Table</b></div>
              <div className="mb-[1.5px] flex h-[4px] items-center gap-[4px]"><span className="text-[#3979c9]">기본</span><span>Storage</span><span>Partitions</span><span className="ml-auto flex gap-[.4px]">{btnColor.map((b) => <i key={b} className={`h-[2.6px] w-[5px] ${b}`} />)}</span></div>
              {[["이름 :", "TABLE_IS"], ["유형 :", "◎ 일반 테이블   ○ 파티션드 테이블"], ["테이블스페이스", "USR"], ["로그 레벨", "사용안함"], ["행 수 :", "6,480"], ["생성 일시", "2015-10-01 08:10:56"], ["수정일시", "2015-10-07 11:12:07"]].map(([a, b], i) => (
                <div key={a} className={`flex h-[7.85px] items-center ${i === 3 ? "border-t border-[#e1e5ea]" : ""}`}><span className="w-[19px] text-[#7f8c9d]">{a}</span><b className="whitespace-pre">{b}</b></div>
              ))}
              <div className="mt-[8px] flex justify-center gap-[2px] text-[2.2px] text-white"><b className="w-[9.5px] bg-[#3d7fc5] py-[.5px] text-center">Save</b><b className="w-[9.5px] bg-[#7761ad] py-[.5px] text-center">Cancel</b></div>
            </div>
          </div>
        </div>
      </div>
    </div>
  );
}

function LineChart({ red }: { red?: boolean }) {
  return (
    <svg viewBox="0 0 60 29" preserveAspectRatio="none" className="h-full w-full">
      <path d="M2 4h56M2 9h56M2 14h56M2 19h56M2 23h56M10 2v21M18 2v21M26 2v21M34 2v21M42 2v21M50 2v21" stroke="#e6e8ec" strokeWidth=".4" />
      <path d="M2 13C6 16 8 16 12 17C16 19 17 19 20 18C26 16 31 15 36 12C42 9 44 7 48 8C50 11 54 17 58 21" fill="none" stroke={red ? "#df8386" : "#9b9bc6"} strokeWidth=".8" />
      <path d="M2 9C5 15 8 17 11 18C15 13 17 3 20 3C23 4 25 8 28 8C31 7 32 9 36 9C42 11 46 14 50 20C54 20 56 14 58 14" fill="none" stroke="#74b9da" strokeWidth=".8" />
      <path d="M24 26.5h3" stroke={red ? "#c91f32" : "#9b9bc6"} /><path d="M32 26.5h3" stroke="#3c90cf" />
      <g fontSize="1.9" fill="#666"><text x="28" y="27.2">1</text><text x="36" y="27.2">2</text>{red && <text x="26" y="2.2">Trend line</text>}{[2, 10, 18, 26, 34, 42, 50].map((x) => <text key={x} x={x} y="24.8">{x / 2}</text>)}</g>
    </svg>
  );
}

function Charts() {
  return (
    <div className={`flex h-[108px] w-[143px] flex-col overflow-hidden border border-[#c6c8cb] bg-[#eceef0] leading-none ${KR}`}>
      <div className="flex h-[6.5px] shrink-0 bg-[#3e3e3e]">
        <b className="flex w-[42px] items-center justify-center gap-[1px] bg-[#f5f5f5] text-[3.7px] text-[#444]">Chart <span className="h-[2.4px] w-[2.4px] bg-[#333]" /></b>
        <b className="flex w-[8px] items-center justify-center bg-[#f5b914] text-[3.5px] text-white">+</b>
        <span className="ml-auto mr-[1px] mt-[2px] h-[3px] w-[3.5px] border border-[#999]" />
      </div>
      <div className="grid flex-1 grid-cols-[60px_73px] grid-rows-[28.5px_29px_30.5px] gap-x-[1.7px] gap-y-[2px] pl-[1.5px] pt-[5px] [&>div]:bg-white">
        <div><LineChart /></div>
        <div><LineChart red /></div>
        <div>
          <svg viewBox="0 0 60 29" className="h-full w-full">
            <path d="M10 1v22M18 1v22M26 1v22M34 1v22M42 1v22M50 1v22" stroke="#e4e6ea" strokeWidth=".4" />
            {[25, 33, 16, 8, 50, 16, 36, 25, 30, 33, 4, 18].map((w, i) => <rect key={i} x="2.5" y={1.3 + i * 1.8} width={w} height="1.5" fill={i === 10 ? "#4b86b6" : i % 2 ? "#7cb9dd" : "#908fc0"} />)}
            <path d="M2.3 1v22M2 23h56" stroke="#aaa" strokeWidth=".3" /><path d="M25 26.5h2.5" stroke="#8d8ac0" /><path d="M33 26.5h2.5" stroke="#50a5d3" />
            <g fontSize="1.9" fill="#666"><text x="29" y="27.2">1</text><text x="37" y="27.2">2</text></g>
          </svg>
        </div>
        <div>
          <svg viewBox="0 0 73 29" className="h-full w-full">
            <path d="M6 5h65M6 10h65M6 15h65M6 20h65" stroke="#e4e6ea" strokeWidth=".4" />
            {[[9, 12], [6, 3], [3, 17], [6, 12], [9, 10], [11, 1], [1, 7]].map(([a, b], i) => <g key={i}><rect x={6.5 + i * 9.5} y={23.5 - a} width="2.8" height={a} fill="#c9182f" /><rect x={9.7 + i * 9.5} y={23.5 - b} width="2.6" height={b} fill="#2684cb" /></g>)}
            <path d="M5 23.7h66" stroke="#999" strokeWidth=".4" /><path d="M34 27h2.5" stroke="#c9182f" /><path d="M42 27h2.5" stroke="#2684cb" />
            <g fontSize="2" fill="#666"><text x="31" y="3">Chart graph</text><text x="38" y="27.6">1</text><text x="46" y="27.6">2</text></g>
          </svg>
        </div>
        <div>
          <svg viewBox="0 0 60 30.5" className="h-full w-full">
            <path d="M25 16V3.2a12.8 12.8 0 0 1 9.9 4.7z" fill="#bdb9d8" />
            <path d="M25 16l9.9-8.1a12.8 12.8 0 0 1-1.9 18.1z" fill="#a8cce2" />
            <path d="M25 16l8 10a12.8 12.8 0 0 1-19.1-3.6z" fill="#18a5b6" />
            <path d="M25 16l-11.1 6.4A12.8 12.8 0 0 1 25 3.2z" fill="#a5d3ca" />
            {["#6b62a5", "#5aa6cc", "#18a5b6", "#83c6b5"].map((c, i) => <g key={c}><rect x="41" y={10.5 + i * 3.2} width="2" height="1.8" fill={c} /><text x="45" y={12.2 + i * 3.2} fontSize="2.2" fill="#666">Series {i + 1}</text></g>)}
          </svg>
        </div>
        <div>
          <svg viewBox="0 0 73 30.5" className="h-full w-full">
            <path d="M5 4h66M5 9h66M5 14h66M5 19h66M14 1v23M24 1v23M34 1v23M44 1v23M54 1v23M64 1v23" stroke="#e6e8ed" strokeWidth=".4" />
            {Array.from({ length: 240 }, (_, i) => { const x = 7 + ((rnd(i + 1) + rnd(i + 500) + rnd(i + 900)) / 3) * 66; return <circle key={i} cx={x} cy={24 - x * 0.22 + (rnd(i + 1500) - 0.5) * 11} r=".65" fill={x < 36 ? "#716dac" : "#62a9d3"} opacity=".8" />; })}
            <path d="M5 24.3h66M5 1v23" stroke="#bbb" strokeWidth=".3" /><path d="M30 28h2.5" stroke="#6a63aa" /><path d="M43 28h2.5" stroke="#3996cd" />
            <g fontSize="2" fill="#666"><text x="34" y="28.6">Female</text><text x="47" y="28.6">Male</text>{[40, 50, 60, 70, 80, 90].map((x, i) => <text key={x} x={8 + i * 10} y="26.4">{x}</text>)}</g>
          </svg>
        </div>
      </div>
    </div>
  );
}

export default function App() {
  return (
    <main className="flex h-[560px] w-[980px] gap-[20px] overflow-hidden bg-white">
      <Panel title="데이터 작업 모니터링" className="w-[580px]">
        <div className="flex flex-col gap-[10px] pl-[50px] pt-[50px]">
          <JobMonitor />
          <div className="flex gap-[10px]">
            <Designer />
            <Projects />
          </div>
        </div>
      </Panel>
      <div className="flex w-[380px] flex-col gap-[20px]">
        <Panel title="데이터 워크플로우 모니터링" className="h-[300px]">
          <div className="pl-[59px] pt-[35px]"><Tibero /></div>
        </Panel>
        <Panel title="데이터 워크플로우 작업결과" className="h-[240px]">
          <div className="flex gap-[13px] pl-[33px] pt-[41px]">
            <Detail />
            <Charts />
          </div>
        </Panel>
      </div>
    </main>
  );
}
